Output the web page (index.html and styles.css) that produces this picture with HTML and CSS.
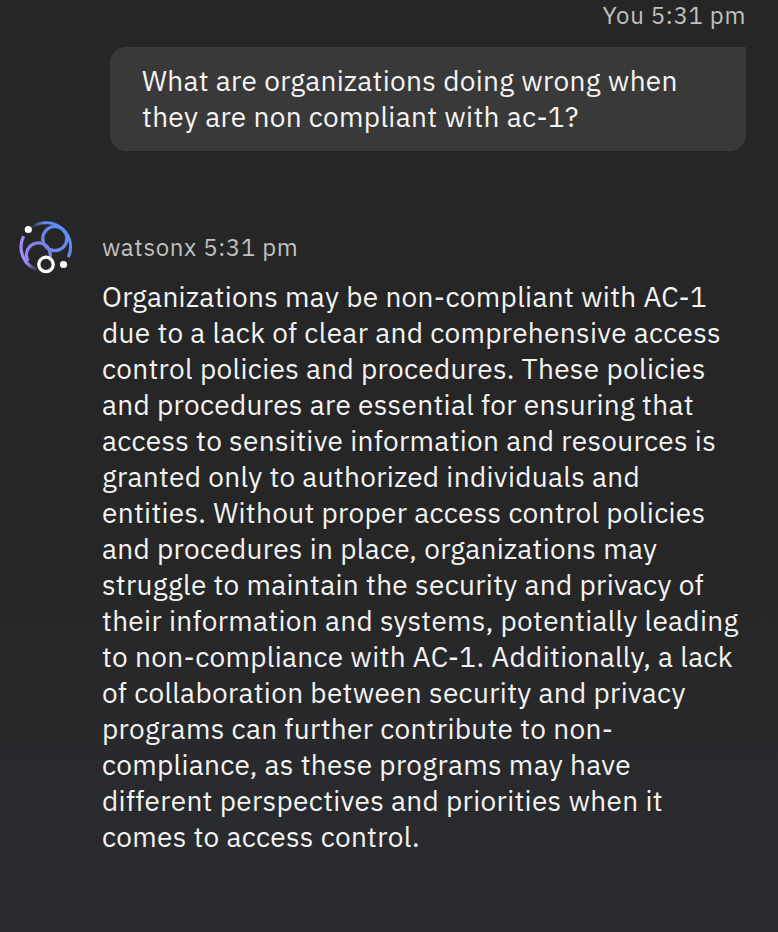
FILE: index.html
```html
<!DOCTYPE html>
<html lang="en">
<head>
<meta charset="utf-8">
<title>watsonx</title>
<link rel="stylesheet" href="styles.css">
</head>
<body>
<main class="chat">
  <section class="request">
    <div class="meta meta-user">You 5:31 pm</div>
    <p class="bubble">What are organizations doing wrong when they are non compliant with ac-1?</p>
  </section>
  <section class="response">
    <svg class="avatar" viewBox="0 0 56 56" fill="none" aria-hidden="true">
      <defs>
        <linearGradient id="ring" gradientUnits="userSpaceOnUse" x1="4" y1="50" x2="50" y2="6"><stop stop-color="#a58aff"/><stop offset=".5" stop-color="#7a80ea"/><stop offset=".7" stop-color="#6489f2"/><stop offset="1" stop-color="#5c8fff"/></linearGradient>
        <linearGradient id="fadeTop" gradientUnits="userSpaceOnUse" x1="13" y1="0" x2="26" y2="0"><stop stop-color="#6489f2" stop-opacity="0"/><stop offset="1" stop-color="#6489f2"/></linearGradient>
        <linearGradient id="fadeLow" gradientUnits="userSpaceOnUse" x1="11" y1="42" x2="19" y2="52"><stop stop-color="#a58aff"/><stop offset="1" stop-color="#a58aff" stop-opacity="0"/></linearGradient>
      </defs>
      <path d="M13.5 8.3A24.5 24.5 0 0 1 27 3.8" stroke="url(#fadeTop)" stroke-width="3"/>
      <path d="M26.8 3.8A24.3 24.3 0 0 1 50.3 38.2" stroke="url(#ring)" stroke-width="3.2"/>
      <path d="M5.6 17.2A24.5 24.5 0 0 0 19 51" stroke="url(#fadeLow)" stroke-width="3.2"/>
      <circle cx="36.8" cy="19.6" r="12.1" stroke="url(#ring)" stroke-width="3.2"/>
      <path d="M10.2 42A11.9 11.9 0 1 1 31.9 38.8" stroke="url(#ring)" stroke-width="3.2"/>
      <circle cx="28" cy="45.4" r="7.2" fill="#262626" stroke="#fff" stroke-width="3.3"/>
      <circle cx="10.3" cy="10.5" r="3.6" fill="#fff"/>
      <circle cx="45.5" cy="45.5" r="3.6" fill="#fff"/>
    </svg>
    <div class="content">
      <div class="meta">watsonx 5:31 pm</div>
      <p class="answer">Organizations may be non-compliant with AC-1 due to a lack of clear and comprehensive access control policies and procedures. These policies and procedures are essential for ensuring that access to sensitive information and resources is granted only to authorized individuals and entities. Without proper access control policies and procedures in place, organizations may struggle to maintain the security and privacy of their information and systems, potentially leading to non-compliance with AC-1. Additionally, a lack of collaboration between security and privacy programs can further contribute to non-compliance, as these programs may have different perspectives and priorities when it comes to access control.</p>
    </div>
  </section>
</main>
</body>
</html>
```
FILE: styles.css
```css
* { box-sizing: border-box; }
body {
  margin: 0;
  color: #f4f4f4;
  background: #262626;
  font-family: "IBM Plex Sans", "Open Sans", sans-serif;
}
.chat {
  height: 932px;
  overflow: hidden;
  background: linear-gradient(#262626 0, #262626 540px, #2a2b2f 850px, #292b30 100%);
}
.request {
  display: flex;
  flex-direction: column;
  align-items: flex-end;
  padding-right: 32px;
}
.meta {
  color: #c0c0c0;
  font-size: 24px;
  line-height: 32px;
  letter-spacing: .64px;
  white-space: nowrap;
}
.meta-user {
  height: 31px;
  line-height: 30px;
}
.bubble {
  width: 636px;
  height: 104px;
  margin: 16px 0 0;
  padding: 16px 32px;
  border-radius: 16px 0 16px 16px;
  background: #393939;
}
.bubble, .answer {
  font-size: 28px;
  line-height: 36px;
  letter-spacing: .32px;
}
.response {
  display: flex;
  margin-top: 68px;
  padding-left: 18px;
}
.avatar {
  flex: none;
  width: 56px;
  height: 56px;
  margin-right: 28px;
}
.content { padding-top: 12px; }
.answer {
  width: 644px;
  margin: 16px 0 0;
}
```
